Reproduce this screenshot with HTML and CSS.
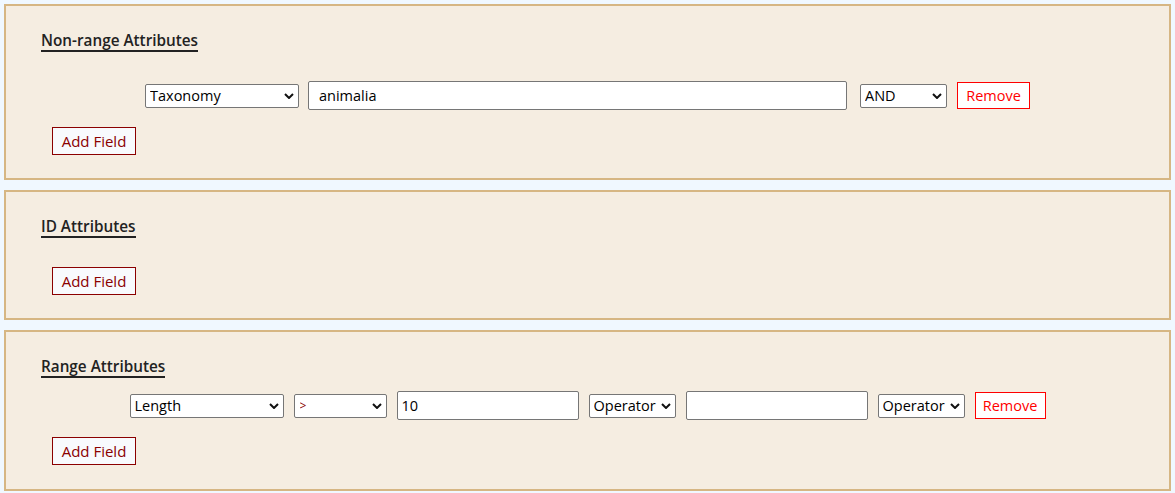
FILE: index.html
```html
<!DOCTYPE html>
<html lang="en">
<head>
<meta charset="utf-8">
<title>Search Attributes</title>
<link rel="stylesheet" href="styles.css">
</head>
<body>
<section class="panel">
  <h3 class="heading">Non-range Attributes</h3>
  <div class="row row-one">
    <span class="sel w-attr">
      <select><option>Taxonomy</option></select>
      <svg class="chev" width="10" height="6" viewBox="0 0 10 6"><path d="M1 1l4 4 4-4" fill="none" stroke="#111" stroke-width="2"/></svg>
    </span>
    <input class="text wide" type="text" value="animalia">
    <span class="sel w-and">
      <select><option>AND</option></select>
      <svg class="chev" width="10" height="6" viewBox="0 0 10 6"><path d="M1 1l4 4 4-4" fill="none" stroke="#111" stroke-width="2"/></svg>
    </span>
    <button class="remove r-one" type="button">Remove</button>
  </div>
  <button class="add" type="button">Add Field</button>
</section>

<section class="panel">
  <h3 class="heading">ID Attributes</h3>
  <button class="add" type="button">Add Field</button>
</section>

<section class="panel">
  <h3 class="heading tight">Range Attributes</h3>
  <div class="row row-range">
    <span class="sel w-attr">
      <select><option>Length</option></select>
      <svg class="chev" width="10" height="6" viewBox="0 0 10 6"><path d="M1 1l4 4 4-4" fill="none" stroke="#111" stroke-width="2"/></svg>
    </span>
    <span class="sel w-cmp">
      <select class="small"><option>&gt;</option></select>
      <svg class="chev" width="10" height="6" viewBox="0 0 10 6"><path d="M1 1l4 4 4-4" fill="none" stroke="#111" stroke-width="2"/></svg>
    </span>
    <input class="text narrow" type="text" value="10">
    <span class="sel w-op">
      <select><option>Operator</option></select>
      <svg class="chev" width="10" height="6" viewBox="0 0 10 6"><path d="M1 1l4 4 4-4" fill="none" stroke="#111" stroke-width="2"/></svg>
    </span>
    <input class="text narrow" type="text" value="">
    <span class="sel w-op">
      <select><option>Operator</option></select>
      <svg class="chev" width="10" height="6" viewBox="0 0 10 6"><path d="M1 1l4 4 4-4" fill="none" stroke="#111" stroke-width="2"/></svg>
    </span>
    <button class="remove r-range" type="button">Remove</button>
  </div>
  <button class="add" type="button">Add Field</button>
</section>
</body>
</html>
```
FILE: styles.css
```css
* { box-sizing: border-box; }

html, body { margin: 0; }

body {
  padding: 4px;
  background: #f0f8ff;
  font-family: "Open Sans", "Noto Sans", "Liberation Sans", sans-serif;
  color: #222;
}

.panel {
  background: #f5ede1;
  border: 2px solid #d6b683;
  padding: 24px 35px 23px;
  margin-bottom: 10px;
}

.panel:last-child {
  margin-bottom: 0;
  padding-bottom: 24px;
}

.heading {
  display: inline-block;
  margin: 0 0 29px;
  font-size: 15.3px;
  font-weight: 600;
  line-height: 20px;
  color: #222;
  border-bottom: 2px solid #222;
  vertical-align: top;
}

.heading + .add,
.heading + .row { display: flex; }

.heading.tight { margin-bottom: 13px; }

.row {
  display: flex;
  justify-content: center;
  align-items: center;
  height: 29px;
  margin-bottom: 17px;
}

.row-one .sel.w-attr { margin-right: 9px; }
.row-one .wide { margin-right: 13px; }
.row-one .w-and { margin-right: 10px; }

.row-range { gap: 10px; }

.sel {
  position: relative;
  display: inline-flex;
  height: 24px;
}

.sel select {
  appearance: none;
  -webkit-appearance: none;
  width: 100%;
  height: 24px;
  margin: 0;
  padding: 0 0 0 4px;
  border: 1px solid #767676;
  border-radius: 2px;
  background: #fff;
  color: #000;
  font-family: inherit;
  font-size: 14.5px;
  line-height: 22px;
}

.sel select.small { font-size: 12px; color: #8b0000; padding-left: 5px; }

.chev {
  position: absolute;
  right: 5px;
  top: 9px;
  pointer-events: none;
}

.w-attr { width: 154px; }
.w-and { width: 87px; }
.w-cmp { width: 93px; }
.w-op { width: 87px; }

.text {
  height: 29px;
  margin: 0;
  border: 1px solid #767676;
  border-radius: 2px;
  background: #fff;
  color: #000;
  font-family: inherit;
  font-size: 14.5px;
  outline: none;
}

.wide { width: 539px; padding: 0 10px; }
.narrow { width: 182px; padding: 0 4px; }

.remove {
  height: 27px;
  margin: 0;
  padding: 0;
  border: 1px solid #ff0000;
  background: #fff;
  color: #ff0000;
  font-family: inherit;
  font-size: 14.5px;
  cursor: pointer;
}

.r-one { width: 73px; }
.r-range { width: 71px; }

.add {
  display: flex;
  align-items: center;
  justify-content: center;
  width: 84px;
  height: 28px;
  margin: 0 0 0 11px;
  padding: 0;
  border: 1px solid #8b0000;
  background: #f8fafd;
  color: #8b0000;
  font-family: inherit;
  font-size: 15px;
  cursor: pointer;
}
```
